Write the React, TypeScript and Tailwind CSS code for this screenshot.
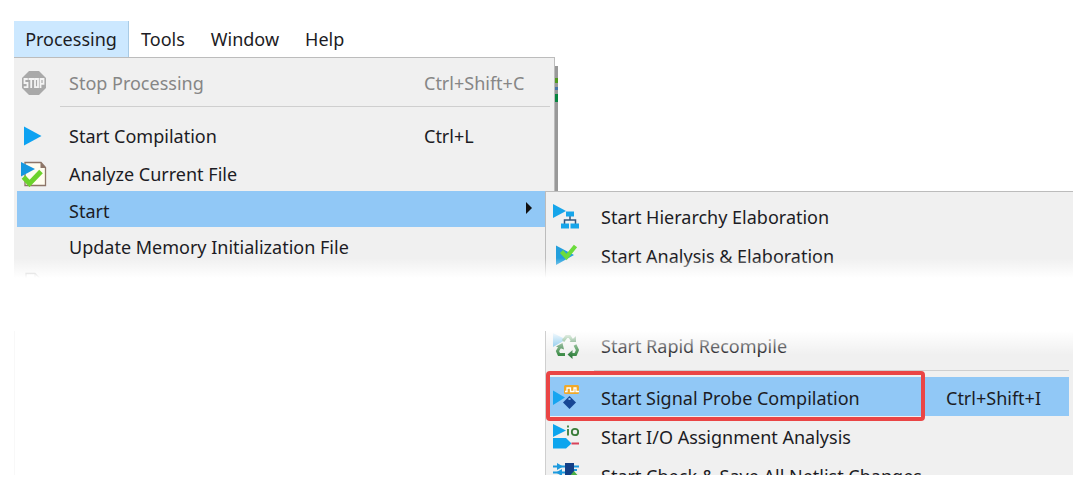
import type { ReactNode } from "react";
import clsx from "clsx";

const PLAY = "#16a5ea";

function StopIcon() {
  return (
    <svg viewBox="0 0 26 26" className="size-[26px]">
      <path d="M8 1h10l7 7v10l-7 7H8l-7-7V8z" fill="#a9a9a9" />
      <g fill="none" stroke="#f4f4f4" strokeWidth="1.8">
        <path d="M6.800 9H3.500v4h3v4.200H2.800" />
        <path d="M7.500 9h5.500M10.200 9v9" />
        <path d="M14 9h3v8.200h-3z" />
        <path d="M19.500 18V9h3v4.800h-3" />
      </g>
    </svg>
  );
}

function PlayIcon() {
  return (
    <svg viewBox="0 0 26 26" className="size-[26px]">
      <path d="M3 3.500l17.500 9.500L3 22.500z" fill="#0da2f2" />
    </svg>
  );
}

function AnalyzeIcon() {
  return (
    <svg viewBox="0 0 26 26" className="size-[26px]">
      <path d="M4 1.500h16l4.500 5V24.500H4z" fill="#fffdf0" stroke="#8d7568" strokeWidth="1.300" />
      <path d="M19.500 1v6h5.500z" fill="#8d7568" />
      <path d="M0 1l14 7L0 15.500z" fill="#1597e0" />
      <path d="M2.500 16l6 6.500L20 10.500" fill="none" stroke="#6bd22c" strokeWidth="5" />
    </svg>
  );
}

function PageIcon() {
  return (
    <svg viewBox="0 0 26 26" className="size-[26px]">
      <path d="M5 1.500h9l5 5V24.500H5z" fill="#fff" stroke="#9a9a9a" strokeWidth="1.300" />
      <path d="M14 1.500v5h5" fill="none" stroke="#9a9a9a" />
    </svg>
  );
}

function HierarchyIcon() {
  return (
    <svg viewBox="0 0 26 26" className="size-[26px]">
      <path d="M0 0l13 7-13 7z" fill={PLAY} />
      <path d="M17 11v5M11.500 21v-5h11v5" fill="none" stroke="#32557c" strokeWidth="1.500" />
      <path d="M13 7.500h8v5h-8zM8 19.500h8v5H8zM17.500 19.500H26v5h-8.500z" fill={PLAY} />
    </svg>
  );
}

function ElaborateIcon() {
  return (
    <svg viewBox="0 0 26 26" className="size-[26px]">
      <path d="M3 2.500l18 9.500L3 22z" fill="#239fdc" />
      <path d="M8.500 8.500l5 5.500L22.500 3" fill="none" stroke="#6bdc3c" strokeWidth="4.200" />
    </svg>
  );
}

function RecycleIcon() {
  return (
    <svg viewBox="0 0 26 26" className="size-[26px]">
      <path d="M0 0l13 6.500L0 14z" fill="#64b8e8" />
      <g fill="none" stroke="#3d8c48" strokeWidth="3">
        <path d="M10 8l3.500-4.500h3L19.500 8" />
        <path d="M7.500 13l-3 5 1.500 3.500h6" />
        <path d="M22 12l2.500 5-2 4.500h-4" />
      </g>
      <path d="M16.500 9H23V3zM3 13.500l6.500-3.500 1.500 6.500zM19.500 17v9L14.500 21.500z" fill="#368044" />
    </svg>
  );
}

function ProbeIcon() {
  return (
    <svg viewBox="0 0 26 26" className="size-[26px]">
      <path d="M0 5.500l12 7L0 20z" fill="#16a5f0" />
      <rect x="11" y="0" width="15" height="9" rx="1.500" fill="#f0a92a" />
      <path d="M12 6.500h2V3h3.500v3.500H21V3h2v3.500h3" fill="none" stroke="#fff" strokeWidth="1.300" />
      <path d="M16.500 11l6.500 6.500-6.500 6.500-6.500-6.500z" fill="#174795" />
      <path d="M15.500 13h2v2h-2z" fill="#89b8e8" />
    </svg>
  );
}

function IoIcon() {
  return (
    <svg viewBox="0 0 26 26" className="size-[26px]">
      <path d="M0 0l13 6.500L0 13z" fill="#0da5ee" />
      <path d="M0 14h13l5.500 5.500-5.500 5H0z" fill="#0da5ee" />
      <path d="M18.500 19.500H26" stroke="#d8435a" strokeWidth="2" />
      <g fill="none" stroke="#3a7d3a" strokeWidth="1.800">
        <path d="M15 5v6.500M15 1.500v2" />
        <ellipse cx="22" cy="8" rx="3.200" ry="3.200" />
      </g>
    </svg>
  );
}

function NetlistIcon() {
  return (
    <svg viewBox="0 0 26 26" className="size-[26px]">
      <path d="M0 3.500h12M0 9.500h12M20 3.500h6M20 7h4" stroke="#1c9ade" strokeWidth="2" />
      <path d="M4 0l6 3.500L4 7zM9 6L3 9.500 9 13z" fill="#1c9ade" />
      <path d="M12 0h9v17h-9z" fill="#133f87" />
      <path d="M21 8l6 7H15z" fill="#4aae46" />
    </svg>
  );
}

type ItemProps = {
  label: string;
  icon?: ReactNode;
  shortcut?: string;
  disabled?: boolean;
  active?: boolean;
  hasSubmenu?: boolean;
  className?: string;
};

// Row of the Processing menu
function MenuItem({ label, icon, shortcut, disabled, active, hasSubmenu, className }: ItemProps) {
  return (
    <button
      type="button"
      role="menuitem"
      disabled={disabled}
      className={clsx(
        "ml-[3px] flex w-[528px] shrink-0 items-center text-left whitespace-nowrap",
        disabled && "text-[#868686]",
        active && "bg-[#91c8f6]",
        className
      )}
    >
      <span className="ml-1 w-12 shrink-0">{icon}</span>
      <span className="w-[355px]">{label}</span>
      {shortcut && <span>{shortcut}</span>}
      {hasSubmenu && (
        <svg viewBox="0 0 8 12" className="mr-3 mb-1.5 ml-auto h-3 w-2">
          <path d="M1 0l6 6-6 6z" fill="#111" />
        </svg>
      )}
    </button>
  );
}

// Row of the Start submenu
function SubmenuItem({ label, icon, shortcut, active }: ItemProps) {
  return (
    <button
      type="button"
      role="menuitem"
      className={clsx(
        "flex h-[39px] shrink-0 items-center pt-[3px] pl-[7px] text-left whitespace-nowrap",
        active && "bg-[#91c8f6]"
      )}
    >
      <span className="w-12 shrink-0">{icon}</span>
      <span className="w-[345px]">{label}</span>
      {shortcut && <span>{shortcut}</span>}
    </button>
  );
}

function App() {
  return (
    <div className="bg-white pt-[21px] pr-4 pb-5 pl-[14px] font-['Noto_Sans',sans-serif] text-[18px] leading-6 text-[#1c1c24]">
      <nav className="flex h-9">
        <button type="button" className="w-[115px] border-r border-[#a9cbe5] bg-[#cce8ff]">
          Processing
        </button>
        <button type="button" className="ml-3">Tools</button>
        <button type="button" className="ml-[26px]">Window</button>
        <button type="button" className="ml-[26px]">Help</button>
      </nav>

      <section className="relative h-[221px]">
        <div
          role="menu"
          className="flex h-full w-[541px] flex-col overflow-hidden border-t border-r border-[#bcbcbc] bg-[#f0f0f0]"
        >
          <MenuItem label="Stop Processing" shortcut="Ctrl+Shift+C" icon={<StopIcon />} disabled className="mt-1 h-[42px]" />
          <hr className="mt-0.5 mr-1 mb-2 ml-[46px] border-[#cfcfcf]" />
          <MenuItem label="Start Compilation" shortcut="Ctrl+L" icon={<PlayIcon />} className="h-[38px] pt-[3px]" />
          <MenuItem label="Analyze Current File" icon={<AnalyzeIcon />} className="h-[38px] pt-[3px]" />
          <MenuItem label="Start" active hasSubmenu className="h-9 pt-[3px]" />
          <MenuItem label="Update Memory Initialization File" className="h-10" />
          <MenuItem label="" icon={<PageIcon />} className="h-9" />
        </div>

        {/* drop shadow with the toolbar showing through at its edge */}
        <div className="absolute top-[9px] left-[541px] flex h-[126px] w-[3px] flex-col bg-[#999] pt-3">
          <span className="h-[5px] bg-[#4f9a1e]" />
          <span className="mt-1 h-[3px] bg-[#4675a8]" />
          <span className="mt-1 h-2 bg-[#078540]" />
        </div>

        <div
          role="menu"
          className="absolute top-[134px] right-0 bottom-0 left-[531px] flex flex-col overflow-hidden border-t border-l border-[#bcbcbc] bg-[#f0f0f0] pt-1"
        >
          <SubmenuItem label="Start Hierarchy Elaboration" icon={<HierarchyIcon />} />
          <SubmenuItem label="Start Analysis & Elaboration" icon={<ElaborateIcon />} />
        </div>
        <div className="absolute right-0 bottom-0 left-0 h-5 bg-linear-to-b from-white/0 to-white" />
      </section>

      <section className="mt-[53px] border-l border-[#f8f8f8] pl-[530px]">
        <div
          role="menu"
          className="relative flex h-36 flex-col overflow-hidden border-l border-[#cfcfcf] bg-[#f0f0f0]"
        >
          <div className="-mt-1.5 flex flex-col pr-1">
            <SubmenuItem label="Start Rapid Recompile" icon={<RecycleIcon />} />
            <hr className="mt-1.5 mb-1.5 ml-12 border-[#cfcfcf]" />
            <SubmenuItem label="Start Signal Probe Compilation" shortcut="Ctrl+Shift+I" icon={<ProbeIcon />} active />
            <SubmenuItem label="Start I/O Assignment Analysis" icon={<IoIcon />} />
            <SubmenuItem label="Start Check & Save All Netlist Changes" icon={<NetlistIcon />} />
          </div>
          <div className="pointer-events-none absolute top-0 right-0 left-0 h-6 bg-linear-to-b from-white to-white/0" />
          <div className="pointer-events-none absolute top-10 left-0 h-[50px] w-[379px] rounded-sm border-4 border-[#ea4545]" />
        </div>
      </section>
    </div>
  );
}

export default App;
